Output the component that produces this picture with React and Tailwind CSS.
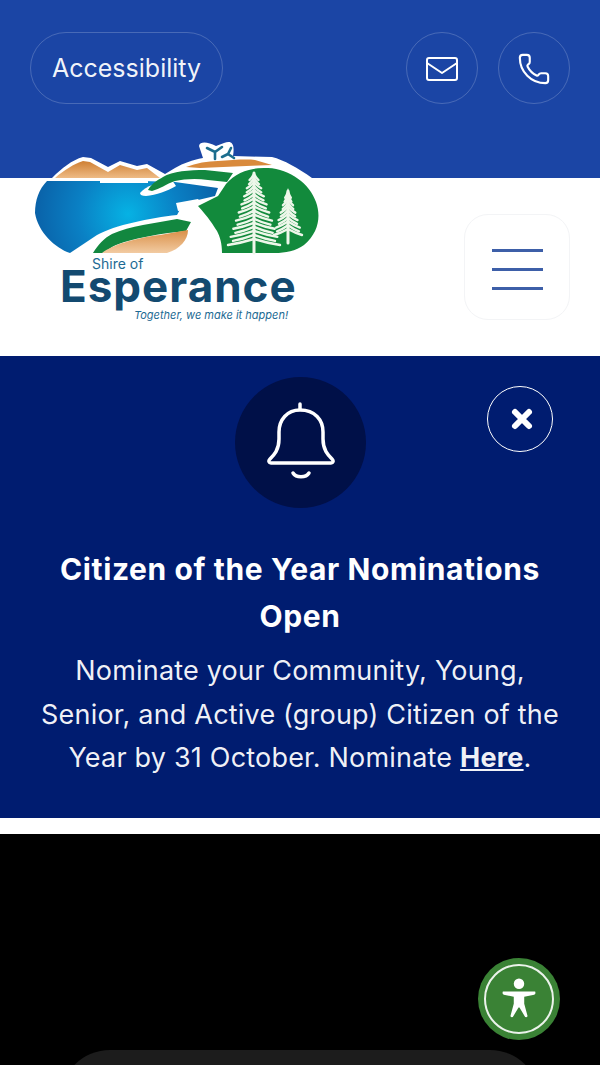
import { Phone } from 'lucide-react';

// feathery pine: a trunk with drooping branches that widen towards the base
function Pine({ x, top, bottom, base, spread, count }) {
  const branches = [];
  for (let i = 0; i < count; i++) {
    const t = (i + 1) / count;
    const y = top + (base - top) * t;
    const w = spread * (0.12 + 0.88 * t) * (i % 2 ? 0.85 : 1);
    branches.push(
      <path key={i} d={`M${x - w} ${y + 3} Q${x - w / 2} ${y + 1} ${x} ${y - 3} Q${x + w / 2} ${y + 1} ${x + w} ${y + 3}`} />
    );
  }
  return (
    <g fill="none" stroke="#eef7ea" strokeWidth="2.4" strokeLinecap="round">
      <path d={`M${x} ${top} V${bottom}`} strokeWidth="3" />
      {branches}
    </g>
  );
}

function LogoArt() {
  return (
    <svg viewBox="20 130 310 135" width="310" height="135" className="block blur-[0.5px]">
      <defs>
        <radialGradient id="lake" gradientUnits="userSpaceOnUse" cx="128" cy="214" r="100">
          <stop offset="0" stopColor="#06b2e4" />
          <stop offset="0.5" stopColor="#0a80c4" />
          <stop offset="1" stopColor="#0a5da4" />
        </radialGradient>
        <linearGradient id="peak" x1="0" y1="0" x2="0" y2="1">
          <stop offset="0" stopColor="#cf7f33" />
          <stop offset="1" stopColor="#eebb85" />
        </linearGradient>
        <linearGradient id="sand" x1="0" y1="0" x2="0" y2="1">
          <stop offset="0" stopColor="#d98f47" />
          <stop offset="1" stopColor="#f2cba2" />
        </linearGradient>
      </defs>
      {/* white outline behind the top edge */}
      <path
        d="M52 178 C62 168 72 160 83 157 L91 158 L108 167 L120 161 L137 166 L147 164 L165 174 L175 168 C184 163 192 160 203 158 L199 146 C200 141 208 142 216 146 L224 143 C232 140 235 144 233 156 L272 157 C284 160 298 168 312 178 L312 190 L60 190 Z"
        fill="#fff"
      />
      <path d="M55 178 C64 170 74 164 83 161 L90 162 L108 172 L120 165 L137 170 L147 168 L160 178 Z" fill="url(#peak)" />
      <path d="M186 167 C196 163 208 161 218 161 C232 160 246 159 255 160 L272 165 L200 168 Z" fill="#d98a3c" />
      {/* lake */}
      <path
        d="M47 181 L143 181 L175 182 L218 188 L215 196 L198 200 L183 204 L177 215 C150 218 115 225 97 235 L70 253 C55 248 38 232 35 213 C35 200 39 189 47 181 Z"
        fill="url(#lake)"
      />
      <path d="M100 181 H148 V183 H100 Z" fill="#fff" />
      {/* white channel edge and the road */}
      <path d="M140 193 C146 186 158 182 172 180 L176 186 C168 191 156 195 146 196 C142 196 140 195 140 193 Z" fill="#fff" />
      <path d="M176 203 L198 199 L205 207 L212 240 L222 253 L167 253 L185 241 L192 222 L185 210 L178 211 Z" fill="#fff" />
      {/* top swoosh */}
      <path d="M148 190 C152 183 158 180 163 177 C172 171 190 170 205 170 L233 173 L227 182 L208 180 C196 178 184 179 175 181 C166 184 160 189 152 191 Z" fill="#12873f" />
      {/* lower shore */}
      <path d="M93 253 C98 245 104 238 112 234 C130 226 155 223 177 219 L191 222 L186 231 C165 233 130 238 112 247 L103 253 Z" fill="#12873f" />
      <path d="M102 253 C112 245 135 238 160 235 L188 230 C188 240 180 249 167 253 Z" fill="url(#sand)" />
      {/* tree hill */}
      <path
        d="M198 206 L218 196 L226 184 C236 172 252 167 268 168 C290 169 310 184 316 202 C321 216 319 232 304 245 C296 251 285 253 275 253 L222 253 C222 243 220 237 217 231 C213 225 209 218 198 206 Z"
        fill="#128a3c"
      />
      <Pine x={254} top={173} bottom={253} base={242} spread={26} count={17} />
      <Pine x={288} top={191} bottom={243} base={232} spread={14} count={11} />
      {/* whale tail */}
      <path d="M207 148 L215 152 L222 147 M215 152 V159 M231 148 L228 154 M228 154 L234 158 M228 154 L222 157" fill="none" stroke="#1c6d8e" strokeWidth="2.6" strokeLinecap="round" />
    </svg>
  );
}

function AccessFigure() {
  return (
    <svg viewBox="0 0 40 44" width="38" height="42" fill="#fff">
      <circle cx="20" cy="6" r="5.5" />
      <path d="M3 14 L37 14 Q38 17 36 17.5 L25.5 19.5 L25.5 27 L29 40 Q29 41.5 26.5 41 L20.5 31 L19.5 31 L13.5 41 Q11 41.5 11 40 L14.5 27 L14.5 19.5 L4 17.5 Q2 17 3 14 Z" />
    </svg>
  );
}

export default function App() {
  return (
    <div className="relative h-screen overflow-hidden bg-black font-['Inter',sans-serif] text-white">
      {/* top bar */}
      <div className="flex h-[178px] items-start justify-between bg-[#1b45a5] px-[30px] pt-8">
        <button className="flex h-[72px] w-[193px] items-center justify-center rounded-full border border-white/20 pt-[2px] text-[25px] text-white/95">
          Accessibility
        </button>
        <div className="flex gap-5">
          <button className="flex h-[72px] w-[72px] items-center justify-center rounded-full border border-white/20 pt-[2px]">
            <svg viewBox="0 0 32 24" width="32" height="24" fill="none" stroke="#fff" strokeWidth="2" strokeLinecap="round" strokeLinejoin="round">
              <rect x="1" y="1" width="30" height="22" rx="2" />
              <path d="M1 6 L16 16 L31 6" />
            </svg>
          </button>
          <button className="flex h-[72px] w-[72px] items-center justify-center rounded-full border border-white/20 pt-[2px]">
            <Phone size={34} strokeWidth={1.5} />
          </button>
        </div>
      </div>

      {/* logo and menu */}
      <div className="flex h-[178px] items-center justify-between bg-white pr-[30px]">
        <div className="relative z-10 ml-[20px] -mt-[79px] h-[195px] w-[310px]">
          <LogoArt />
          <div className="-mt-[6px] ml-[72px] text-[14px] leading-[10px] text-[#1d6a93]">Shire of</div>
          <div className="mt-px ml-[40px] text-[44px] font-bold leading-[33px] tracking-[1px] text-[#134a70]">Esperance</div>
          <div className="ml-[114px] mt-[7px] text-[11px] italic leading-[11px] text-[#1d6a93]">Together, we make it happen!</div>
        </div>
        <button className="flex h-[106px] w-[106px] flex-col items-center justify-center gap-4 rounded-3xl border border-gray-100 bg-white pt-1">
          <span className="h-[3px] w-[51px] bg-[#3d5fa8]" />
          <span className="h-[3px] w-[51px] bg-[#3d5fa8]" />
          <span className="h-[3px] w-[51px] bg-[#3d5fa8]" />
        </button>
      </div>

      {/* alert */}
      <div className="relative h-[462px] bg-[#001c70] px-10 pt-[21px] text-center">
        <div className="mx-auto flex h-[131px] w-[131px] items-center justify-center rounded-full bg-[#001048]">
          <svg viewBox="0 0 70 84" width="70" height="84" fill="none" stroke="#fff" strokeWidth="3.5" strokeLinecap="round" strokeLinejoin="round">
            <path d="M35 3 V8" />
            <path d="M35 9 C22 9 14 19 14 31 V38 C14 49 9 54 5 58 C3 60 4 62 6 62 H66 C68 62 69 60 67 58 C63 54 58 49 58 38 V31 C58 19 50 9 35 9 Z" />
            <path d="M28 72 C31 77 41 77 44 72" />
          </svg>
        </div>
        <button className="absolute right-[47px] top-[30px] flex h-[66px] w-[66px] items-center justify-center rounded-full border border-white pl-[3px]">
          <svg viewBox="0 0 24 24" width="24" height="24" fill="none" stroke="#fff" strokeWidth="6" strokeLinecap="round">
            <path d="M5 5 L19 19 M19 5 L5 19" />
          </svg>
        </button>
        <h2 className="mx-auto mt-[38px] w-[510px] text-[30px] font-bold leading-[47px] tracking-[0.6px]">Citizen of the Year Nominations Open</h2>
        <p className="mt-[9px] text-[27px] leading-[43.5px] tracking-[0.2px] text-white/95">
          Nominate your Community, Young, Senior, and Active (group) Citizen of the Year by 31 October. Nominate{' '}
          <a className="font-bold underline">Here</a>.
        </p>
      </div>

      {/* gap, then the black video section */}
      <div className="h-4 bg-white" />
      <div className="px-[60px] pt-[216px]">
        <div className="h-[100px] rounded-t-[50px] bg-[#1c1c1c]" />
      </div>

      {/* floating accessibility button */}
      <button className="absolute left-[478px] top-[958px] flex h-[82px] w-[82px] items-center justify-center rounded-full bg-[#3a8235]">
        <span className="flex h-[70px] w-[70px] items-center justify-center rounded-full border-2 border-white/90">
          <AccessFigure />
        </span>
      </button>
    </div>
  );
}
